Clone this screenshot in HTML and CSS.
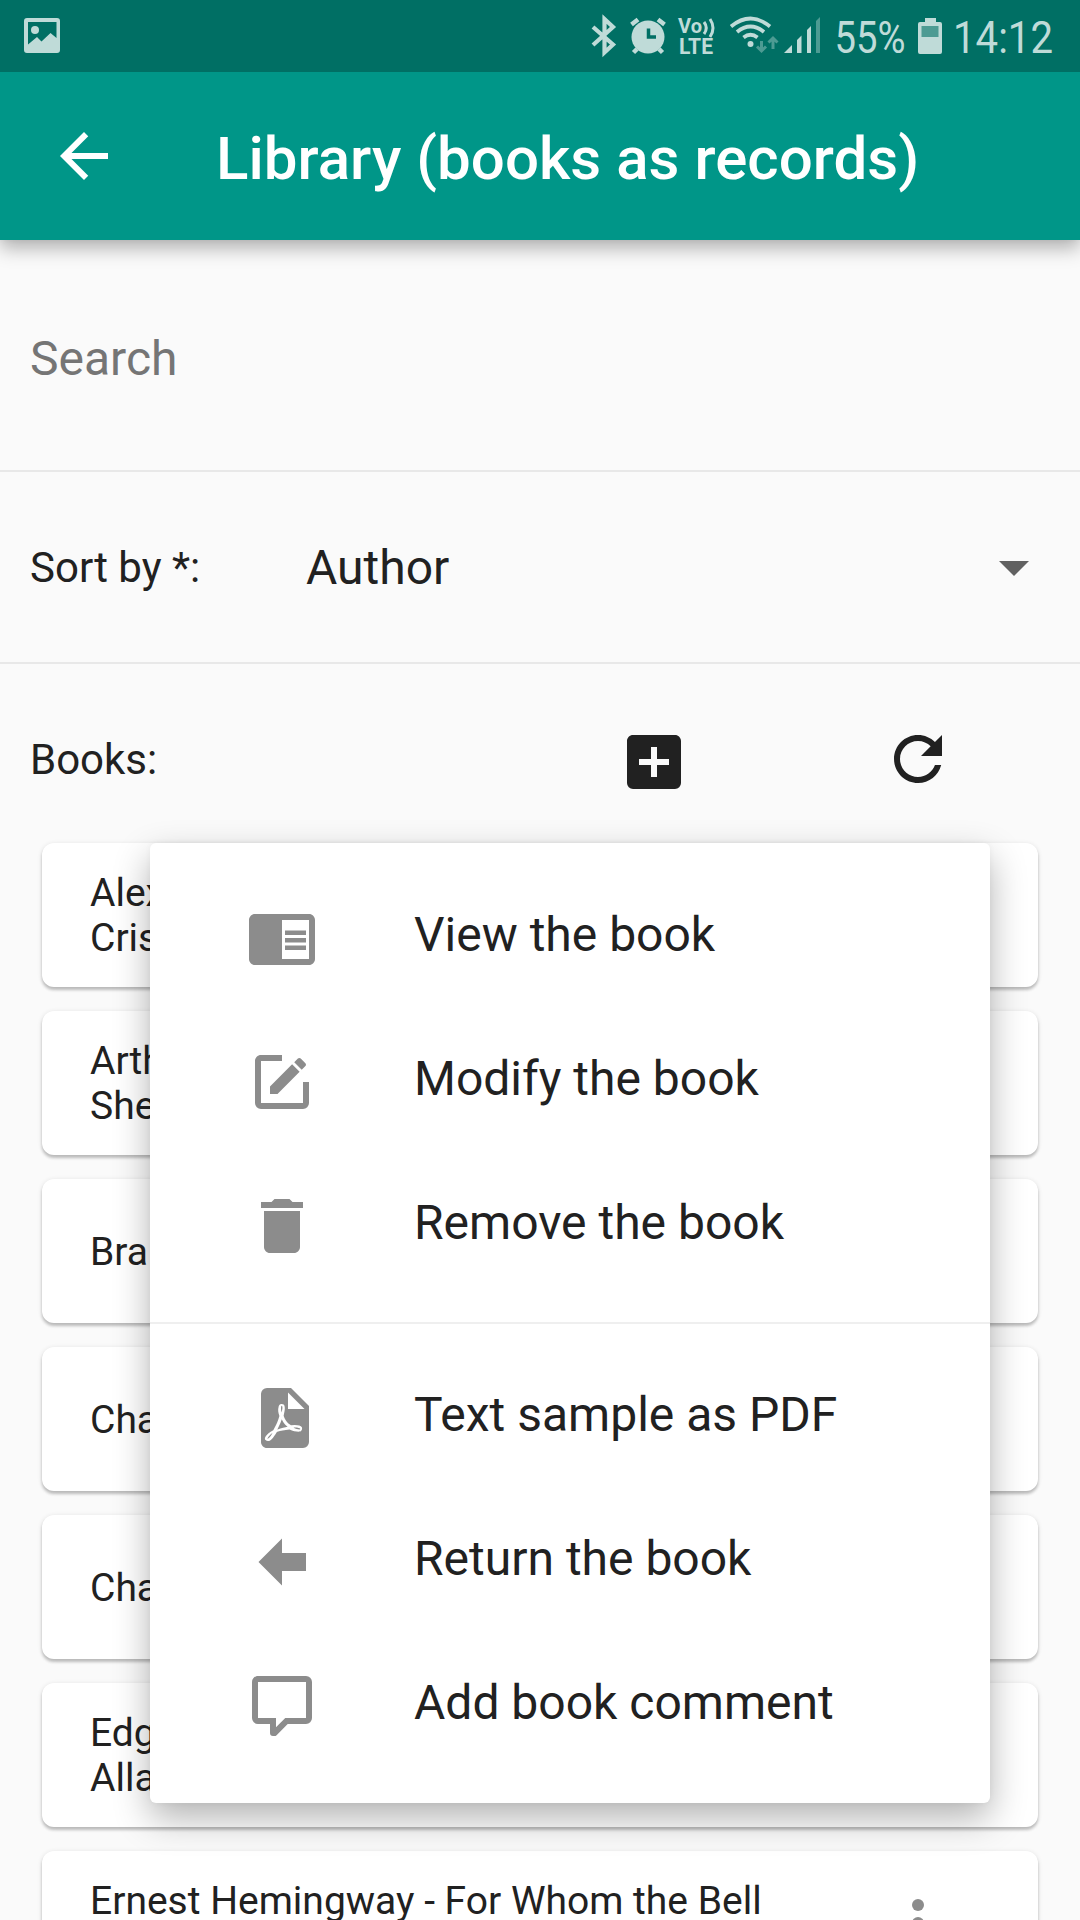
FILE: index.html
```html
<!DOCTYPE html>
<html lang="en">
<head>
<meta charset="utf-8">
<title>Library (books as records)</title>
<link rel="stylesheet" href="styles.css">
</head>
<body>
<header class="top">
  <div class="status">
    <svg class="st-image" width="36" height="36" viewBox="0 0 36 36"><path fill-rule="evenodd" d="M3 0H33A3 3 0 0 1 36 3V32A3 3 0 0 1 33 35H3A3 3 0 0 1 0 32V3A3 3 0 0 1 3 0ZM4 4V26.500L13 19L17.500 23.500L26.500 15L32.500 20V4Z"/><circle cx="11" cy="12" r="4"/></svg>
    <div class="status-right">
      <svg class="st-icons" width="240" height="72" viewBox="580 0 240 72">
        <g class="line"><path d="M593 27L613 44.500L604.500 52.500V19L613 27L593 45" stroke-width="4.200"/></g>
        <circle cx="648" cy="37" r="16.500"/>
        <g class="line"><path d="M631.500 24.500L638 19.500M658 19.500L664.500 24.500" stroke-width="4.500"/><path d="M637 49L633.500 52.500M659 49L662.500 52.500" stroke-width="4.500"/></g>
        <path class="cut" d="M648.500 28.500V37H656"/>
        <text x="678" y="33" font-size="20" font-weight="700" textLength="24" lengthAdjust="spacingAndGlyphs">Vo</text>
        <g class="line"><path d="M704 22Q708.500 28 704 34M710 19Q716 28 710 37" stroke-width="3"/></g>
        <text x="679" y="53.500" font-size="21.500" font-weight="700" textLength="34" lengthAdjust="spacingAndGlyphs">LTE</text>
        <g class="line"><path d="M731 26.500Q750.500 10.500 770 26.500M737 32Q750.500 21 764 32M743.500 37.500Q750.500 32 757.500 37.500" stroke-width="3.800"/></g>
        <circle cx="750.500" cy="44" r="3"/>
        <g class="dim"><path d="M761.500 41V51M757 46.500L761.500 51L766 46.500M773 49V38M768.500 42.500L773 38L777.500 42.500" fill="none" stroke-width="3"/></g>
        <path d="M784 53L792 45V53ZM797 53V40L801.500 35.500V53ZM807 53V30L811 26V53Z"/>
        <path class="dim-fill" d="M816 53V21L820 17V53Z"/>
      </svg>
      <svg class="st-text" width="240" height="72" viewBox="830 0 240 72">
        <text x="834.500" y="53" font-size="45" textLength="71" lengthAdjust="spacingAndGlyphs">55%</text>
        <path d="M925 18H936V22H940Q942 22 942 24V52Q942 54 940 54H920Q918 54 918 52V24Q918 22 920 22H925Z"/>
        <path class="charge" d="M921.500 26H938.500V37H921.500Z"/>
        <text x="953" y="53" font-size="45" textLength="100" lengthAdjust="spacingAndGlyphs">14:12</text>
      </svg>
    </div>
  </div>
  <div class="appbar">
    <svg class="icon" viewBox="0 0 24 24"><path d="M20 11H7.830l5.590-5.590L12 4l-8 8 8 8 1.410-1.410L7.830 13H20v-2z"/></svg>
    <h1 class="title">Library (books as records)</h1>
  </div>
</header>

<main>
  <section class="search">Search</section>
  <section class="sort">
    <span class="sort-label">Sort by *:</span>
    <span class="sort-value">Author</span>
    <svg class="icon drop" viewBox="0 0 24 24"><path d="M7 10l5 5 5-5z"/></svg>
  </section>
  <section class="books-head">
    <span class="books-label">Books:</span>
    <svg class="icon add" viewBox="0 0 24 24"><path d="M17,13H13V17H11V13H7V11H11V7H13V11H17M19,3H5C3.890,3 3,3.890 3,5V19A2,2 0 0,0 5,21H19A2,2 0 0,0 21,19V5C21,3.890 20.100,3 19,3Z"/></svg>
    <svg class="icon refresh" viewBox="0 0 24 24"><path d="M17.650 6.350C16.200 4.900 14.210 4 12 4c-4.420 0-7.990 3.580-7.990 8s3.570 8 7.990 8c3.730 0 6.840-2.550 7.730-6h-2.080c-.820 2.330-3.040 4-5.650 4-3.310 0-6-2.690-6-6s2.690-6 6-6c1.660 0 3.140.690 4.220 1.780L13 11h7V4l-2.350 2.350z"/></svg>
  </section>

  <div class="list">
    <article class="card"><p>Alexandre<br>Cristo</p></article>
    <article class="card"><p>Arthur<br>Sherlock</p></article>
    <article class="card"><p>Bram</p></article>
    <article class="card"><p>Charles</p></article>
    <article class="card"><p>Charles</p></article>
    <article class="card"><p>Edgar<br>Allan</p></article>
    <article class="card"><p>Ernest Hemingway - For Whom the Bell<br>&nbsp;</p>
      <svg class="icon more" viewBox="0 0 24 24"><circle cx="12" cy="6" r="2"/><circle cx="12" cy="12" r="2"/><circle cx="12" cy="18" r="2"/></svg>
    </article>

    <nav class="menu">
      <div class="item"><svg class="icon" viewBox="0 0 24 24"><path d="M13 12h7v1.500h-7zm0-2.500h7V11h-7zm0 5h7V16h-7zM21 4H3c-1.100 0-2 .9-2 2v13c0 1.100.9 2 2 2h18c1.100 0 2-.9 2-2V6c0-1.100-.9-2-2-2zm0 15h-9V6h9v13z"/></svg><span>View the book</span></div>
      <div class="item"><svg class="icon" viewBox="0 0 24 24"><path d="M5,3C3.890,3 3,3.890 3,5V19A2,2 0 0,0 5,21H19A2,2 0 0,0 21,19V12H19V19H5V5H12V3H5M17.780,4C17.610,4 17.430,4.070 17.300,4.200L16.080,5.410L18.580,7.910L19.800,6.700C20.060,6.440 20.060,6 19.800,5.750L18.250,4.200C18.120,4.070 17.950,4 17.780,4M15.370,6.120L8,13.500V16H10.500L17.870,8.620L15.370,6.120Z"/></svg><span>Modify the book</span></div>
      <div class="item"><svg class="icon" viewBox="0 0 24 24"><path d="M6 19c0 1.100.9 2 2 2h8c1.100 0 2-.9 2-2V7H6v12zM19 4h-3.500l-1-1h-5l-1 1H5v2h14V4z"/></svg><span>Remove the book</span></div>
      <div class="divider"></div>
      <div class="item"><svg class="icon" viewBox="0 0 24 24"><path d="M14,9H19.500L14,3.500V9M7,2H15L21,8V20A2,2 0 0,1 19,22H7C5.890,22 5,21.100 5,20V4A2,2 0 0,1 7,2M11.930,12.440C12.340,13.340 12.860,14.080 13.460,14.590L13.870,14.910C13,15.070 11.800,15.350 10.530,15.840V15.840L10.420,15.880L10.920,14.840C11.370,13.970 11.700,13.180 11.930,12.440M18.410,16.250C18.590,16.070 18.680,15.840 18.690,15.590C18.720,15.390 18.670,15.200 18.570,15.040C18.280,14.570 17.530,14.350 16.290,14.350L15,14.420L14.130,13.840C13.500,13.320 12.930,12.410 12.530,11.280L12.570,11.140C12.900,9.810 13.210,8.200 12.550,7.540C12.390,7.380 12.170,7.300 11.940,7.300H11.700C11.330,7.300 11,7.690 10.910,8.070C10.540,9.400 10.760,10.130 11.130,11.340V11.350C10.880,12.230 10.560,13.250 10.050,14.280L9.090,16.080L8.200,16.570C7,17.320 6.430,18.160 6.320,18.690C6.280,18.880 6.300,19.050 6.370,19.230L6.400,19.280L6.880,19.590L7.320,19.700C8.130,19.700 9.050,18.750 10.290,16.630L10.470,16.560C11.500,16.230 12.780,16 14.500,15.810C15.530,16.320 16.740,16.550 17.500,16.550C17.940,16.550 18.240,16.440 18.410,16.250M18,15.540L18.090,15.650C18.080,15.750 18.050,15.760 18,15.780H17.960L17.770,15.800C17.310,15.800 16.600,15.610 15.870,15.290C15.960,15.190 16,15.190 16.100,15.190C17.500,15.190 17.900,15.440 18,15.540M8.830,17C8.180,18.190 7.590,18.850 7.140,19C7.190,18.620 7.640,17.960 8.350,17.310L8.830,17M11.850,10.090C11.620,9.190 11.610,8.460 11.780,8.040L11.850,7.920L12,7.970C12.170,8.210 12.190,8.530 12.090,9.070L12.060,9.230L11.900,10.050L11.850,10.090Z"/></svg><span>Text sample as PDF</span></div>
      <div class="item"><svg class="icon" viewBox="0 0 24 24"><path d="M20,9V15H12V19.840L4.160,12L12,4.160V9H20Z"/></svg><span>Return the book</span></div>
      <div class="item"><svg class="icon" viewBox="0 0 24 24"><path d="M9,22A1,1 0 0,1 8,21V18H4A2,2 0 0,1 2,16V4C2,2.890 2.900,2 4,2H20A2,2 0 0,1 22,4V16A2,2 0 0,1 20,18H13.900L10.200,21.710C10,21.900 9.750,22 9.500,22V22H9M10,16V19.080L13.080,16H20V4H4V16H10Z"/></svg><span>Add book comment</span></div>
    </nav>
  </div>
</main>
</body>
</html>
```
FILE: styles.css
```css
* { box-sizing: border-box; margin: 0; padding: 0; }

body {
  width: 1080px;
  height: 1920px;
  overflow: hidden;
  background: #fafafa;
  color: #212121;
  font-family: Roboto, "Liberation Sans", sans-serif;
  font-size: 42px;
}

svg { display: block; flex: none; }
.icon { width: 72px; height: 72px; fill: currentColor; }

.top {
  position: relative;
  height: 240px;
  background: #009688;
  box-shadow: 0 8px 18px rgba(0, 0, 0, .3), 0 0 6px rgba(0, 0, 0, .04);
}

.status {
  display: flex;
  justify-content: space-between;
  align-items: center;
  height: 72px;
  padding: 0 10px 0 24px;
  background: #006f64;
  fill: #bfdbd8;
}
.status-right { display: flex; gap: 10px; }
.line { fill: none; stroke: #bfdbd8; }
.cut { fill: none; stroke: #006f64; stroke-width: 3.500px; }
.dim { stroke: #4d9b93; }
.dim-fill, .charge { fill: #4d9b93; }

.appbar {
  display: flex;
  align-items: center;
  height: 168px;
  padding-left: 48px;
  color: #fff;
}
.title {
  margin: 6px 0 0 96px;
  font-size: 60px;
  font-weight: 500;
  line-height: 70px;
  letter-spacing: .04px;
  white-space: nowrap;
}

.search {
  height: 232px;
  padding: 91px 30px 0;
  border-bottom: 2px solid #e8e8e8;
  color: #757575;
  font-size: 48px;
  line-height: 56px;
}

.sort {
  display: flex;
  align-items: center;
  height: 192px;
  padding: 0 30px;
  border-bottom: 2px solid #e8e8e8;
}
.sort-label { width: 276px; }
.sort-value { flex: 1; font-size: 48px; }
.drop { color: #616161; }

.books-head {
  display: flex;
  align-items: center;
  height: 179px;
  padding: 0 30px;
}
.books-label { width: 588px; margin-top: 12px; }
.add { margin-top: 17px; }
.refresh { margin: 11px 0 0 192px; }

.list {
  position: relative;
  display: flex;
  flex-direction: column;
  gap: 24px;
  padding: 0 42px;
}
.card {
  display: flex;
  align-items: center;
  justify-content: space-between;
  flex: none;
  height: 144px;
  padding: 0 84px 0 48px;
  border-radius: 12px;
  background: #fff;
  box-shadow: 0 3px 3px rgba(0, 0, 0, .2), 0 1px 5px rgba(0, 0, 0, .12);
  font-size: 39px;
  line-height: 45px;
}
.card p { padding-top: 2px; }
.more { color: #8c8c8c; }

.menu {
  position: absolute;
  top: 0;
  left: 150px;
  width: 840px;
  padding: 24px 0;
  border-radius: 6px;
  background: #fff;
  box-shadow: 0 15px 36px rgba(0, 0, 0, .3), 0 0 6px rgba(0, 0, 0, .04);
  font-size: 48px;
}
.item {
  display: flex;
  align-items: center;
  gap: 96px;
  height: 144px;
  padding: 0 96px 2px;
  white-space: nowrap;
}
.item .icon { color: #8c8c8c; }
.item span { margin-bottom: 8px; }
.divider {
  height: 48px;
  padding-top: 23px;
}
.divider::after {
  content: "";
  display: block;
  height: 2px;
  background: #efefef;
}
```
